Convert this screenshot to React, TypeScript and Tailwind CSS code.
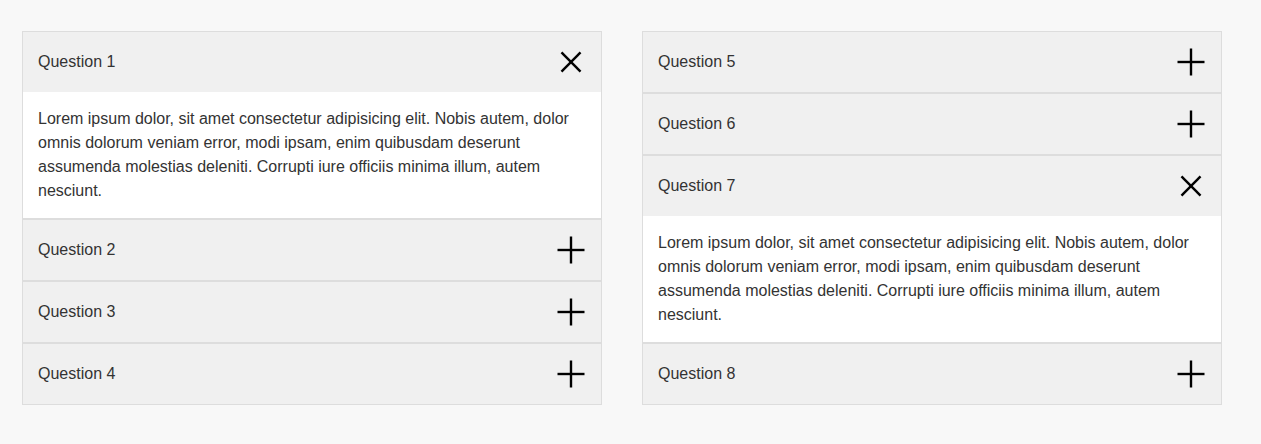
import { useState } from 'react';

const answer =
  'Lorem ipsum dolor, sit amet consectetur adipisicing elit. Nobis autem, dolor omnis dolorum veniam error, modi ipsam, enim quibusdam deserunt assumenda molestias deleniti. Corrupti iure officiis minima illum, autem nesciunt.';

const columns = [
  [1, 2, 3, 4],
  [5, 6, 7, 8],
];

function ToggleIcon({ open }: { open: boolean }) {
  return (
    <svg
      width="28"
      height="28"
      viewBox="0 0 28 28"
      className={open ? 'rotate-45' : ''}
      stroke="#000"
      strokeWidth="2.4"
    >
      <line x1="14" y1="0.5" x2="14" y2="27.5" />
      <line x1="0.5" y1="14" x2="27.5" y2="14" />
    </svg>
  );
}

function Item({ n, open, onToggle }: { n: number; open: boolean; onToggle: () => void }) {
  return (
    <div className="border border-[#dddddd]">
      <button
        onClick={onToggle}
        className="w-full h-[60px] flex items-center justify-between pl-[15px] pr-[16px] bg-[#f0f0f0] text-[16px] text-[#333] cursor-pointer"
      >
        <span>Question {n}</span>
        <ToggleIcon open={open} />
      </button>
      {open && (
        <div className="bg-white px-[15px] py-[15px] text-[16px] leading-[24px] text-[#333]">
          {answer}
        </div>
      )}
    </div>
  );
}

export default function App() {
  const [openItems, setOpenItems] = useState<number[]>([1, 7]);

  const toggle = (n: number) =>
    setOpenItems((prev) => (prev.includes(n) ? prev.filter((x) => x !== n) : [...prev, n]));

  return (
    <div className="min-h-[444px] bg-[#f8f8f8] pt-[31px] pl-[22px] font-['Liberation_Sans',Arial,sans-serif]">
      <div className="flex items-start gap-[40px]">
        {columns.map((col, i) => (
          <div key={i} className="w-[580px] flex flex-col">
            {col.map((n) => (
              <Item key={n} n={n} open={openItems.includes(n)} onToggle={() => toggle(n)} />
            ))}
          </div>
        ))}
      </div>
    </div>
  );
}
